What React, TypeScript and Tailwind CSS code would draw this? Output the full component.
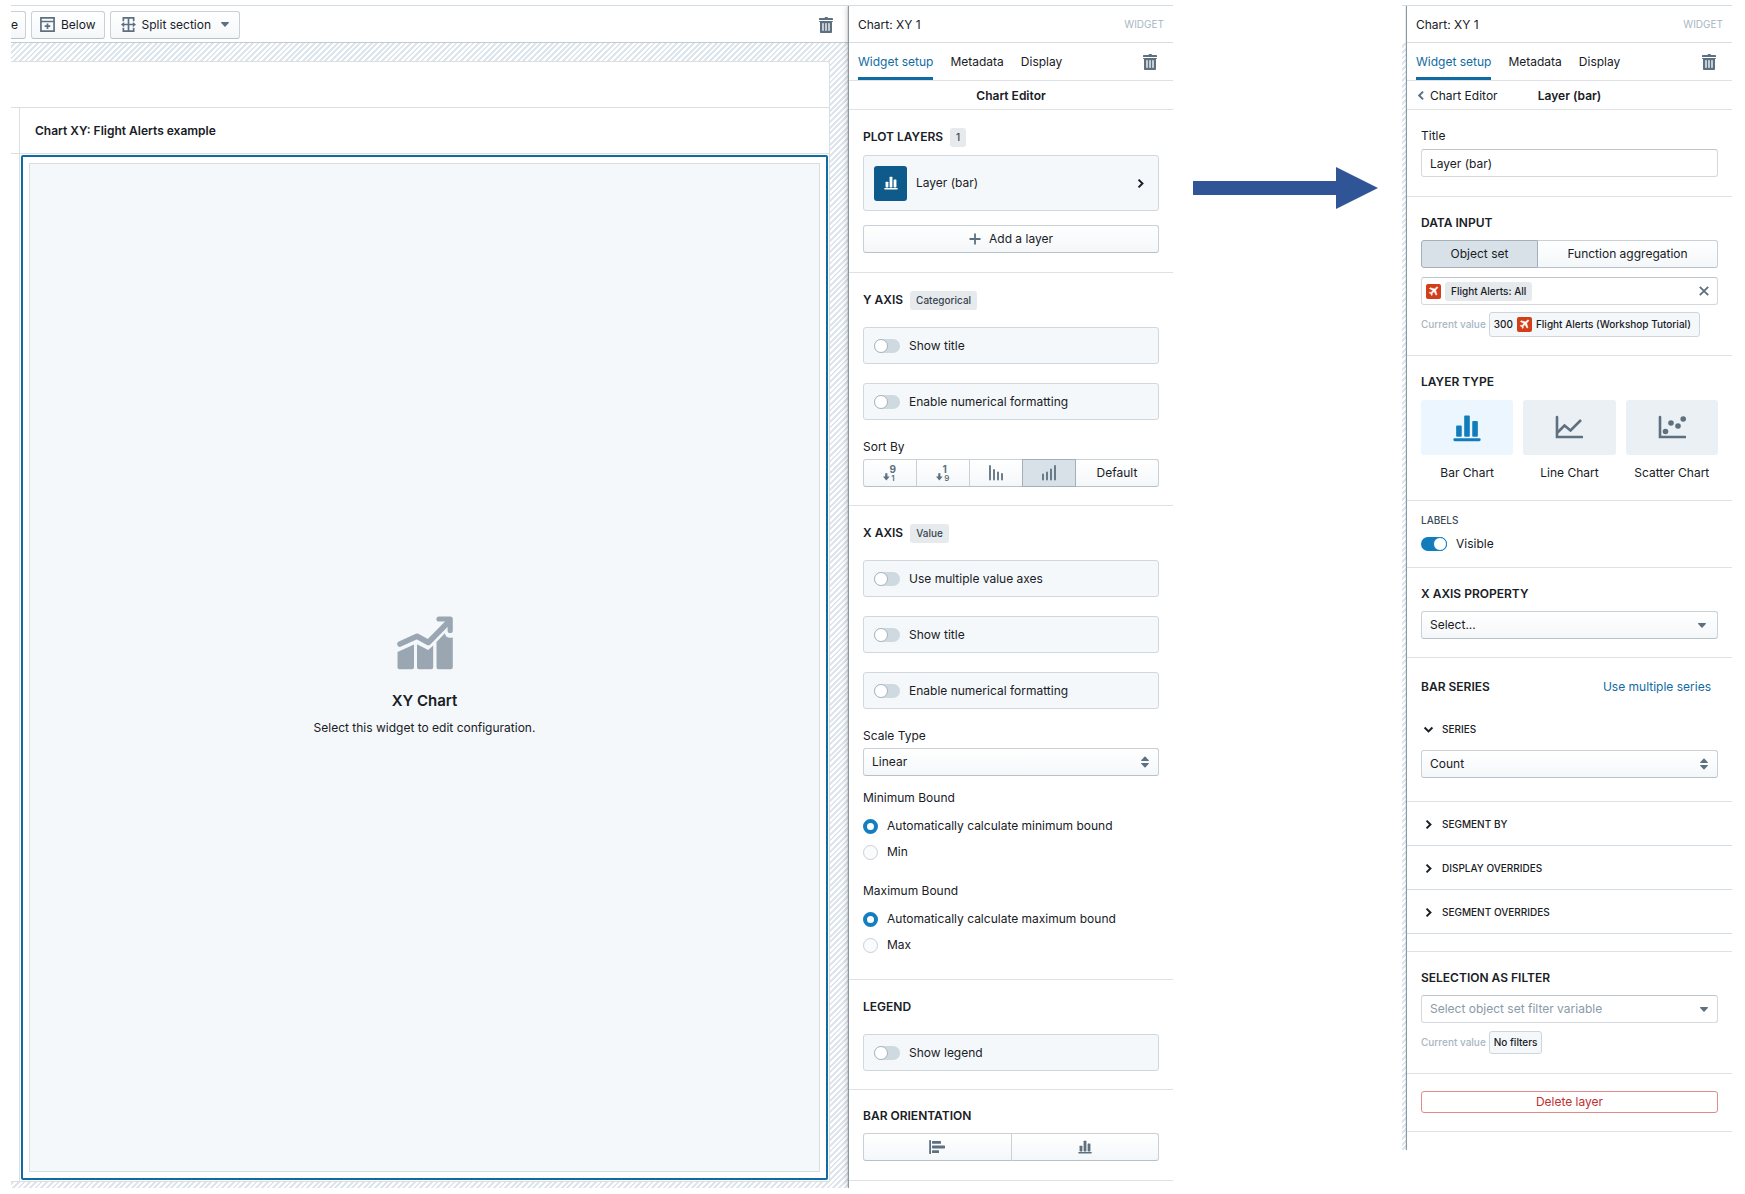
import { useState } from "react"
import type { ReactNode } from "react"
import clsx from "clsx"

const stripes = "bg-[repeating-linear-gradient(135deg,#ffffff_0px,#ffffff_2px,#dde6ec_2px,#dde6ec_4px)]"
const raised = "border border-[#c9d0d6] border-b-[#b9c1c8] bg-linear-to-b from-white to-[#f4f7f9]"

function TrashIcon() {
  return (
    <svg className="size-4" viewBox="0 0 16 16" fill="#5c7080" aria-hidden="true">
      <path d="M3 5h10v9H3z" fillOpacity="0.35" />
      <path d="M14.49 3.99h-13c-.28 0-.5.22-.5.5s.22.5.5.5h.5v10c0 .55.45 1 1 1h10c.55 0 1-.45 1-1v-10h.5c.28 0 .5-.22.5-.5s-.22-.5-.5-.5zm-8.5 9c0 .55-.45 1-1 1s-1-.45-1-1v-6c0-.55.45-1 1-1s1 .45 1 1v6zm3 0c0 .55-.45 1-1 1s-1-.45-1-1v-6c0-.55.45-1 1-1s1 .45 1 1v6zm3 0c0 .55-.45 1-1 1s-1-.45-1-1v-6c0-.55.45-1 1-1s1 .45 1 1v6zm2-12h-4c0-.55-.45-1-1-1h-2c0 .55-.45 1-1 1h-4c-.55 0-1 .45-1 1v1h14v-1c0-.55-.45-1-1-1z" />
    </svg>
  )
}

function BarsIcon({ className }: { className: string }) {
  return (
    <svg className={className} viewBox="0 0 16 16" fill="currentColor" aria-hidden="true">
      <rect x="1.8" y="6.5" width="3.2" height="6.5" rx="0.6" />
      <rect x="6.4" y="0.8" width="3.2" height="12.2" rx="0.6" />
      <rect x="11" y="4" width="3.2" height="9" rx="0.6" />
      <rect x="0.2" y="13.8" width="15.6" height="1.7" rx="0.8" />
    </svg>
  )
}

function Chevron({ dir = "right", className }: { dir?: "right" | "left" | "down"; className?: string }) {
  const d = { right: "M4.5 2l5 5-5 5", left: "M9 2L4 7l5 5", down: "M2 4.5l5 5 5-5" }[dir]
  return (
    <svg className={clsx("size-[11px] shrink-0", className)} viewBox="0 0 14 14" fill="none" stroke="currentColor" strokeWidth="2.5" aria-hidden="true">
      <path d={d} />
    </svg>
  )
}

function Caret() {
  return (
    <svg className="h-[5px] w-2" viewBox="0 0 8 5" fill="#5c7080" aria-hidden="true">
      <path d="M.6 0h6.8c.5 0 .7.5.4.9L4.5 4.6c-.3.4-.7.4-1 0L.2.9C-.1.5.1 0 .6 0z" />
    </svg>
  )
}

function DoubleCaret() {
  return (
    <svg className="h-3 w-2" viewBox="0 0 8 12" fill="#5c7080" aria-hidden="true">
      <path d="M4 .3L7.8 4.2c.3.4.1.9-.4.9H.6c-.5 0-.7-.5-.4-.9zM4 11.7l3.8-3.9c.3-.4.1-.9-.4-.9H.6c-.5 0-.7.5-.4.9z" />
    </svg>
  )
}

function PlaneIcon() {
  return (
    <svg className="size-[15px] shrink-0" viewBox="0 0 15 15" aria-hidden="true">
      <rect width="15" height="15" rx="2" fill="#d33d17" />
      <path
        d="M11.6 3.1c-.4-.4-1.1-.2-1.6.3L8.5 4.9 4.2 3.7l-.8.8 3.5 2-1.8 1.9-1.4-.2-.6.6 1.7.9.9 1.8.6-.6-.2-1.5 1.9-1.8 2.1 3.6.8-.8-1.3-4.4 1.6-1.4c.5-.5.8-1.1.4-1.5z"
        fill="#ffffff"
        stroke="#ffffff"
        strokeWidth="0.5"
      />
    </svg>
  )
}

function Section({ className, children }: { className: string; children: ReactNode }) {
  return <section className={clsx("flex flex-col border-b border-[#dfe2e5] px-[14px]", className)}>{children}</section>
}

function Heading({ badge, children }: { badge?: string; children: ReactNode }) {
  return (
    <div className="flex h-5 items-center gap-[7px]">
      <h2 className="text-[12px] font-semibold">{children}</h2>
      {badge && <span className="rounded-[3px] bg-[#e6eaed] px-[6px] text-[10px] leading-[19px] font-medium text-[#38444d]">{badge}</span>}
    </div>
  )
}

function Toggle({ label, on }: { label: string; on?: boolean }) {
  return (
    <label className="flex h-4 items-center gap-[9px]">
      <input
        type="checkbox"
        defaultChecked={on}
        className="h-[14px] w-[26px] shrink-0 appearance-none rounded-full bg-[#ced9e0] before:block before:size-[14px] before:rounded-full before:border before:border-[#a9b4bd] before:bg-white checked:bg-[#137cbd] checked:before:translate-x-3 checked:before:border-[#137cbd]"
      />
      {label}
    </label>
  )
}

function ToggleCard({ label }: { label: string }) {
  return (
    <div className="flex h-[37px] items-center rounded-[3px] border border-[#d1d8dd] bg-[#f5f8fa] px-[10px]">
      <Toggle label={label} />
    </div>
  )
}

function Select({ label, options, className, double, pad = "right-[10px]" }: { label: string; options: string[]; className: string; double?: boolean; pad?: string }) {
  return (
    <div className="relative">
      <select aria-label={label} className={clsx("h-7 w-full appearance-none rounded-[3px] pr-7 pl-2", className)}>
        {options.map((o) => (
          <option key={o}>{o}</option>
        ))}
      </select>
      <span className={clsx("pointer-events-none absolute inset-y-0 flex items-center", pad)}>{double ? <DoubleCaret /> : <Caret />}</span>
    </div>
  )
}

function Bound({ title, name, auto, manual }: { title: string; name: string; auto: string; manual: string }) {
  return (
    <fieldset>
      <legend className="h-4 leading-4">{title}</legend>
      <div className="mt-3 flex flex-col gap-[10px]">
        {[auto, manual].map((text, i) => (
          <label key={text} className="flex h-4 items-center gap-[9px]">
            <input
              type="radio"
              name={name}
              defaultChecked={i === 0}
              className="size-[15px] appearance-none rounded-full border border-[#c9d0d6] bg-[#fafbfc] checked:border-4 checked:border-[#147fc0] checked:bg-white"
            />
            {text}
          </label>
        ))}
      </div>
    </fieldset>
  )
}

function PanelTop() {
  const [tab, setTab] = useState("Widget setup")
  return (
    <>
      <header className="flex h-[37px] items-center justify-between border-b border-[#d9dcdf] px-[9px] pt-[1px]">
        <h1>Chart: XY 1</h1>
        <span className="text-[10px] text-[#a7b6c2]">WIDGET</span>
      </header>
      <nav className="flex h-[38px] items-stretch border-b border-[#dfe2e5] pr-[15px] pl-[9px]">
        <div className="flex gap-[17px]">
          {["Widget setup", "Metadata", "Display"].map((t) => (
            <button key={t} onClick={() => setTab(t)} className={clsx("border-b-3 pt-[3px]", t === tab ? "border-[#106ba3] text-[#106ba3]" : "border-transparent")}>
              {t}
            </button>
          ))}
        </div>
        <button aria-label="Delete widget" className="ml-auto">
          <TrashIcon />
        </button>
      </nav>
    </>
  )
}

function SortIcon({ top, bottom }: { top: string; bottom: string }) {
  return (
    <svg className="h-6 w-4" viewBox="-1 -4 16 24" fill="#5c7080" aria-hidden="true">
      <path d="M2.2 8.2h2.2v3.2h2.3L3.3 15.6 0 11.4h2.2z" />
      <text x="6.5" y="7.6" fontSize="10" fontWeight="700">
        {top}
      </text>
      <text x="8.2" y="15.5" fontSize="8" fontWeight="600">
        {bottom}
      </text>
    </svg>
  )
}

function StepsIcon({ tops }: { tops: number[] }) {
  return (
    <svg className="h-4 w-[14px]" viewBox="0 0 14 16" stroke="#5c7080" strokeWidth="1.8" strokeLinecap="round" aria-hidden="true">
      {tops.map((y, i) => (
        <path key={i} d={`M${1 + i * 4} ${y}V14.6`} />
      ))}
    </svg>
  )
}

function SortBy() {
  const [active, setActive] = useState(3)
  const items = [
    { name: "Value descending", icon: <SortIcon top="9" bottom="1" /> },
    { name: "Value ascending", icon: <SortIcon top="1" bottom="9" /> },
    { name: "Bars descending", icon: <StepsIcon tops={[1, 5, 7.5, 9]} /> },
    { name: "Bars ascending", icon: <StepsIcon tops={[9.5, 7.5, 4.5, 1]} /> },
    { name: "Default", icon: "Default" },
  ]
  return (
    <div className="mt-1 flex h-7">
      {items.map((item, i) => (
        <button
          key={item.name}
          aria-label={item.name}
          onClick={() => setActive(i)}
          className={clsx(
            "flex items-center justify-center first:rounded-l-[3px] last:rounded-r-[3px] not-first:-ml-px",
            i === 4 ? "flex-1" : "w-[54px]",
            i === active ? "z-1 border border-[#a3afb9] bg-[#d8e1e8]" : raised
          )}
        >
          {item.icon}
        </button>
      ))}
    </div>
  )
}

function ChartEditor() {
  return (
    <aside className="z-1 w-[324px] shrink-0 bg-white pb-[7px] shadow-[-1px_0_1px_#8d979f,-2px_0_5px_#10161a33]">
      <PanelTop />
      <div className="flex h-[29px] items-center justify-center border-b border-[#dfe2e5] pt-[1px] font-semibold">Chart Editor</div>

      <Section className="pt-[17px] pb-[19px]">
        <Heading badge="1">PLOT LAYERS</Heading>
        <button className="mt-2 flex h-14 items-center rounded-[3px] border border-[#d1d8dd] bg-[#f5f8fa] pr-3 pl-[10px]">
          <span className="flex h-[35px] w-[33px] items-center justify-center rounded-[3px] bg-[#0e5a8a] text-white">
            <BarsIcon className="size-[14px]" />
          </span>
          <span className="ml-[9px]">Layer (bar)</span>
          <Chevron className="ml-auto" />
        </button>
        <button className={clsx("mt-[14px] flex h-7 items-center justify-center gap-2 rounded-[3px]", raised)}>
          <svg className="size-3" viewBox="0 0 12 12" stroke="#5c7080" strokeWidth="1.8" aria-hidden="true">
            <path d="M6 .5v11M.5 6h11" />
          </svg>
          Add a layer
        </button>
      </Section>

      <Section className="pt-[17px] pb-[18px]">
        <Heading badge="Categorical">Y AXIS</Heading>
        <div className="mt-[17px] flex flex-col gap-[19px]">
          <ToggleCard label="Show title" />
          <ToggleCard label="Enable numerical formatting" />
        </div>
        <div className="mt-[19px] h-4 leading-4">Sort By</div>
        <SortBy />
      </Section>

      <Section className="pt-[17px] pb-[26px]">
        <Heading badge="Value">X AXIS</Heading>
        <div className="mt-[17px] flex flex-col gap-[19px]">
          <ToggleCard label="Use multiple value axes" />
          <ToggleCard label="Show title" />
          <ToggleCard label="Enable numerical formatting" />
        </div>
        <div className="mt-[19px] mb-1 h-4 leading-4">Scale Type</div>
        <Select label="Scale Type" options={["Linear", "Logarithmic"]} className={raised} double />
        <div className="mt-[14px] flex flex-col gap-[23px]">
          <Bound title="Minimum Bound" name="min" auto="Automatically calculate minimum bound" manual="Min" />
          <Bound title="Maximum Bound" name="max" auto="Automatically calculate maximum bound" manual="Max" />
        </div>
      </Section>

      <Section className="pt-[17px] pb-[18px]">
        <Heading>LEGEND</Heading>
        <div className="mt-[17px]">
          <ToggleCard label="Show legend" />
        </div>
      </Section>

      <Section className="pt-4 pb-[19px]">
        <Heading>BAR ORIENTATION</Heading>
        <div className="mt-[7px] flex h-7">
          <button aria-label="Horizontal" className={clsx("flex flex-1 items-center justify-center rounded-l-[3px]", raised)}>
            <svg className="size-4" viewBox="0 0 16 16" fill="#5c7080" aria-hidden="true">
              <rect x="0.2" y="1" width="1.8" height="14" rx="0.6" />
              <rect x="3" y="2" width="9" height="2.8" rx="0.6" />
              <rect x="3" y="6.6" width="13" height="2.8" rx="0.6" />
              <rect x="3" y="11.2" width="7" height="2.8" rx="0.6" />
            </svg>
          </button>
          <button aria-label="Vertical" className={clsx("-ml-px flex flex-1 items-center justify-center rounded-r-[3px] text-[#5c7080]", raised)}>
            <BarsIcon className="size-[14px]" />
          </button>
        </div>
      </Section>
    </aside>
  )
}

function CurrentValue({ className, children }: { className: string; children: ReactNode }) {
  return (
    <div className="flex items-center gap-[3px] text-[10px] font-medium">
      <span className="text-[#a7b6c2]">Current value</span>
      <span className={clsx("flex items-center gap-1 rounded-[3px] border border-[#ced6dc] bg-[#f5f8fa]", className)}>{children}</span>
    </div>
  )
}

const layerTypes = [
  { name: "Bar Chart", icon: <BarsIcon className="size-7" /> },
  {
    name: "Line Chart",
    icon: (
      <svg className="size-7" viewBox="0 0 28 28" fill="none" stroke="currentColor" strokeWidth="2.6" strokeLinecap="round" aria-hidden="true">
        <path d="M2 3v20h25" />
        <path d="M2.5 18.5l7-7 6 5L26 6" strokeLinecap="butt" />
      </svg>
    ),
  },
  {
    name: "Scatter Chart",
    icon: (
      <svg className="size-7" viewBox="0 0 28 28" fill="currentColor" aria-hidden="true">
        <path d="M2 3v20h25" fill="none" stroke="currentColor" strokeWidth="2.6" strokeLinecap="round" />
        <circle cx="7.5" cy="17.5" r="2.8" />
        <circle cx="13" cy="9" r="2.8" />
        <circle cx="20" cy="12" r="2.8" />
        <circle cx="25.2" cy="5" r="2.8" />
      </svg>
    ),
  },
]

function LayerEditor() {
  return (
    <aside className="z-1 min-w-0 flex-1 bg-white pb-[18px] shadow-[-1px_0_1px_#8d979f]">
      <PanelTop />
      <div className="grid h-[29px] grid-cols-[1fr_auto_1fr] items-center border-b border-[#dfe2e5] px-[9px] pt-[1px]">
        <button className="flex items-center gap-[3px]">
          <Chevron dir="left" className="text-[#5c7080]" />
          Chart Editor
        </button>
        <span className="font-semibold">Layer (bar)</span>
      </div>

      <Section className="pt-[18px] pb-[19px]">
        <label htmlFor="layer-title" className="h-4 leading-4">
          Title
        </label>
        <input id="layer-title" defaultValue="Layer (bar)" className="mt-[5px] h-7 rounded-[3px] border border-[#d5d9dd] border-t-[#bfc5ca] px-2" />
      </Section>

      <Section className="pt-4 pb-[18px]">
        <Heading>DATA INPUT</Heading>
        <div className="mt-[7px] flex h-7">
          <button className="w-[117px] rounded-l-[3px] border border-[#a3afb9] bg-[#d8e1e8]">Object set</button>
          <button className={clsx("flex-1 rounded-r-[3px] border-l-0", raised)}>Function aggregation</button>
        </div>
        <div className="mt-[9px] mb-[7px] flex h-7 items-center gap-1 rounded-[3px] border border-[#d5d9dd] border-t-[#bfc5ca] pr-[7px] pl-1">
          <PlaneIcon />
          <span className="rounded-[3px] bg-[#e6eaed] px-[6px] text-[10px] leading-[19px] font-medium">Flight Alerts: All</span>
          <button aria-label="Clear" className="ml-auto">
            <svg className="size-3" viewBox="0 0 12 12" stroke="#5c7080" strokeWidth="1.8" aria-hidden="true">
              <path d="M1.8 1.8l8.4 8.4M10.2 1.8l-8.4 8.4" />
            </svg>
          </button>
        </div>
        <CurrentValue className="h-[25px] pr-2 pl-1">
          300 <PlaneIcon /> Flight Alerts (Workshop Tutorial)
        </CurrentValue>
      </Section>

      <Section className="pt-4 pb-[19px]">
        <Heading>LAYER TYPE</Heading>
        <div className="mt-2 grid grid-cols-3 gap-[10px]">
          {layerTypes.map((type, i) => (
            <button key={type.name} className="flex flex-col items-center gap-[10px] leading-4 whitespace-nowrap">
              <span className={clsx("flex h-[55px] w-full items-center justify-center rounded-[3px]", i === 0 ? "bg-[#ebf6fe] text-[#137cbd]" : "bg-[#ebf0f4] text-[#5c7080]")}>{type.icon}</span>
              {type.name}
            </button>
          ))}
        </div>
      </Section>

      <Section className="pt-[11px] pb-[15px]">
        <div className="mb-2 h-4 text-[10px] leading-4 font-medium text-[#394b59]">LABELS</div>
        <Toggle label="Visible" on />
      </Section>

      <Section className="pt-4 pb-[18px]">
        <Heading>X AXIS PROPERTY</Heading>
        <div className="mt-[7px]">
          <Select label="X axis property" options={["Select..."]} className={raised} pad="right-3" />
        </div>
      </Section>

      <Section className="pt-[19px] pb-[23px]">
        <div className="flex items-center justify-between pr-[7px]">
          <Heading>BAR SERIES</Heading>
          <a href="#series" className="text-[#106ba3]">
            Use multiple series
          </a>
        </div>
        <button className="mt-6 mb-[13px] flex h-4 items-center gap-2 pl-[2px] text-[10px] font-medium">
          <Chevron dir="down" />
          SERIES
        </button>
        <Select label="Series" options={["Count", "Sum"]} className={raised} double />
      </Section>

      {["SEGMENT BY", "DISPLAY OVERRIDES", "SEGMENT OVERRIDES"].map((name) => (
        <button key={name} className="flex h-11 w-full items-center gap-2 border-b border-[#d3dce4] pt-[2px] pl-4 text-[10px] font-medium">
          <Chevron />
          {name}
        </button>
      ))}
      <div className="h-[18px] border-b border-[#dfe2e5]" />

      <Section className="pt-4 pb-[19px]">
        <Heading>SELECTION AS FILTER</Heading>
        <div className="mt-[7px] mb-2">
          <Select label="Selection as filter" options={["Select object set filter variable"]} className="border border-[#d5d9dd] border-t-[#bfc5ca] bg-white text-[#8a9ba8]" />
        </div>
        <CurrentValue className="h-[23px] px-1">No filters</CurrentValue>
      </Section>

      <Section className="pt-[17px] pb-[18px]">
        <button className="h-[22px] rounded-[3px] border border-[#e08a8a] text-[#c23030]">Delete layer</button>
      </Section>
    </aside>
  )
}

function Canvas() {
  return (
    <main className="flex min-w-0 flex-1 flex-col">
      <div className="flex h-[37px] items-center border-b border-[#c5cbd0] pt-[1px] pr-[15px]">
        <button className={clsx("flex h-7 w-[15px] items-center justify-start rounded-r-[3px] border-l-0", raised)}>e</button>
        <button className={clsx("ml-[5px] flex h-7 items-center gap-[6px] rounded-[3px] px-2", raised)}>
          <svg className="size-[15px]" viewBox="0 0 16 16" fill="none" stroke="#5c7080" strokeWidth="1.8" aria-hidden="true">
            <path d="M1 1h14v14H1zM1 4.8h14M8 6.8v6M5 9.8h6" />
          </svg>
          Below
        </button>
        <button className={clsx("ml-[5px] flex h-7 items-center gap-[6px] rounded-[3px] px-[10px]", raised)}>
          <svg className="size-[15px]" viewBox="0 0 16 16" fill="none" stroke="#5c7080" strokeWidth="1.8" aria-hidden="true">
            <path d="M2.5 4.5V1h11v3.5M2.5 11.5V15h11v-3.5M8 1v14M2 8h12" />
            <path d="M0 8l3.4-2.8v5.6zM16 8l-3.4-2.8v5.6z" fill="#5c7080" stroke="none" />
          </svg>
          Split section
          <span className="ml-1">
            <Caret />
          </span>
        </button>
        <button aria-label="Delete section" className="ml-auto">
          <TrashIcon />
        </button>
      </div>
      <div className={clsx("flex flex-1 pt-[18px] pr-[19px] pb-[6px]", stripes)}>
        <div className="flex flex-1 flex-col rounded-tr-[3px] border-t border-r border-b border-[#dcdfe2] bg-white">
          <div className="h-[46px] border-b border-[#dcdfe2]" />
          <div className="flex flex-1">
            <div className="w-[9px] border-r border-[#dcdfe2]">
              <div className="h-[46px] border-b border-[#dcdfe2]" />
            </div>
            <div className="flex flex-1 flex-col">
              <h2 className="flex h-[46px] items-center border-b border-[#dcdfe2] px-[15px] pt-[1px] font-semibold">Chart XY: Flight Alerts example</h2>
              <div className="m-px flex flex-1 rounded-[2px] border-2 border-[#106ba3] p-[6px]">
                <div className="flex flex-1 flex-col items-center justify-center border border-[#d8dde1] bg-[#f5f8fa] pt-[18px]">
                  <svg className="h-[54px] w-14" viewBox="0 0 56 54" fill="#9aa7b2" aria-hidden="true">
                    <path d="M.5 36L17 28.5v22.8a2 2 0 0 1-2 2H2.5a2 2 0 0 1-2-2z" />
                    <path d="M20 28.2l11.2 5.8 5-4.5v21.8a2 2 0 0 1-2 2H22a2 2 0 0 1-2-2z" />
                    <path d="M39.5 26l8.3-8.7c.8 3.8 3.7 5.3 8 4.2v29.8a2 2 0 0 1-2 2H41.5a2 2 0 0 1-2-2z" />
                    <path d="M3 28l17-7.8 11.3 6.3L52 5.5" fill="none" stroke="#9aa7b2" strokeWidth="5.6" strokeLinecap="round" strokeLinejoin="round" />
                    <path d="M42 3h11.2v11.5" fill="none" stroke="#9aa7b2" strokeWidth="5.2" strokeLinecap="round" strokeLinejoin="round" />
                  </svg>
                  <h3 className="mt-[21px] text-[15px] leading-5 font-semibold">XY Chart</h3>
                  <p className="mt-[7px] leading-5">Select this widget to edit configuration.</p>
                </div>
              </div>
            </div>
          </div>
        </div>
      </div>
    </main>
  )
}

export default function App() {
  return (
    <div className="flex min-h-screen items-start bg-white pt-[5px] pr-[13px] pb-[6px] pl-[11px] font-['Inter',sans-serif] text-[12px] text-[#182026]">
      <div className="flex min-w-0 flex-1 overflow-hidden border-t border-[#d3dce4]">
        <Canvas />
        <ChartEditor />
      </div>
      <svg className="mx-5 mt-[162px] h-[42px] w-[185px] shrink-0" viewBox="0 0 185 42" fill="#2f5597" aria-hidden="true">
        <path d="M0 14h143V0l42 21-42 21V28H0z" />
      </svg>
      <div className="ml-1 flex w-[330px] shrink-0 overflow-hidden border-t border-[#d3dce4]">
        <div className={clsx("mt-[37px] w-[5px]", stripes)} />
        <LayerEditor />
      </div>
    </div>
  )
}
